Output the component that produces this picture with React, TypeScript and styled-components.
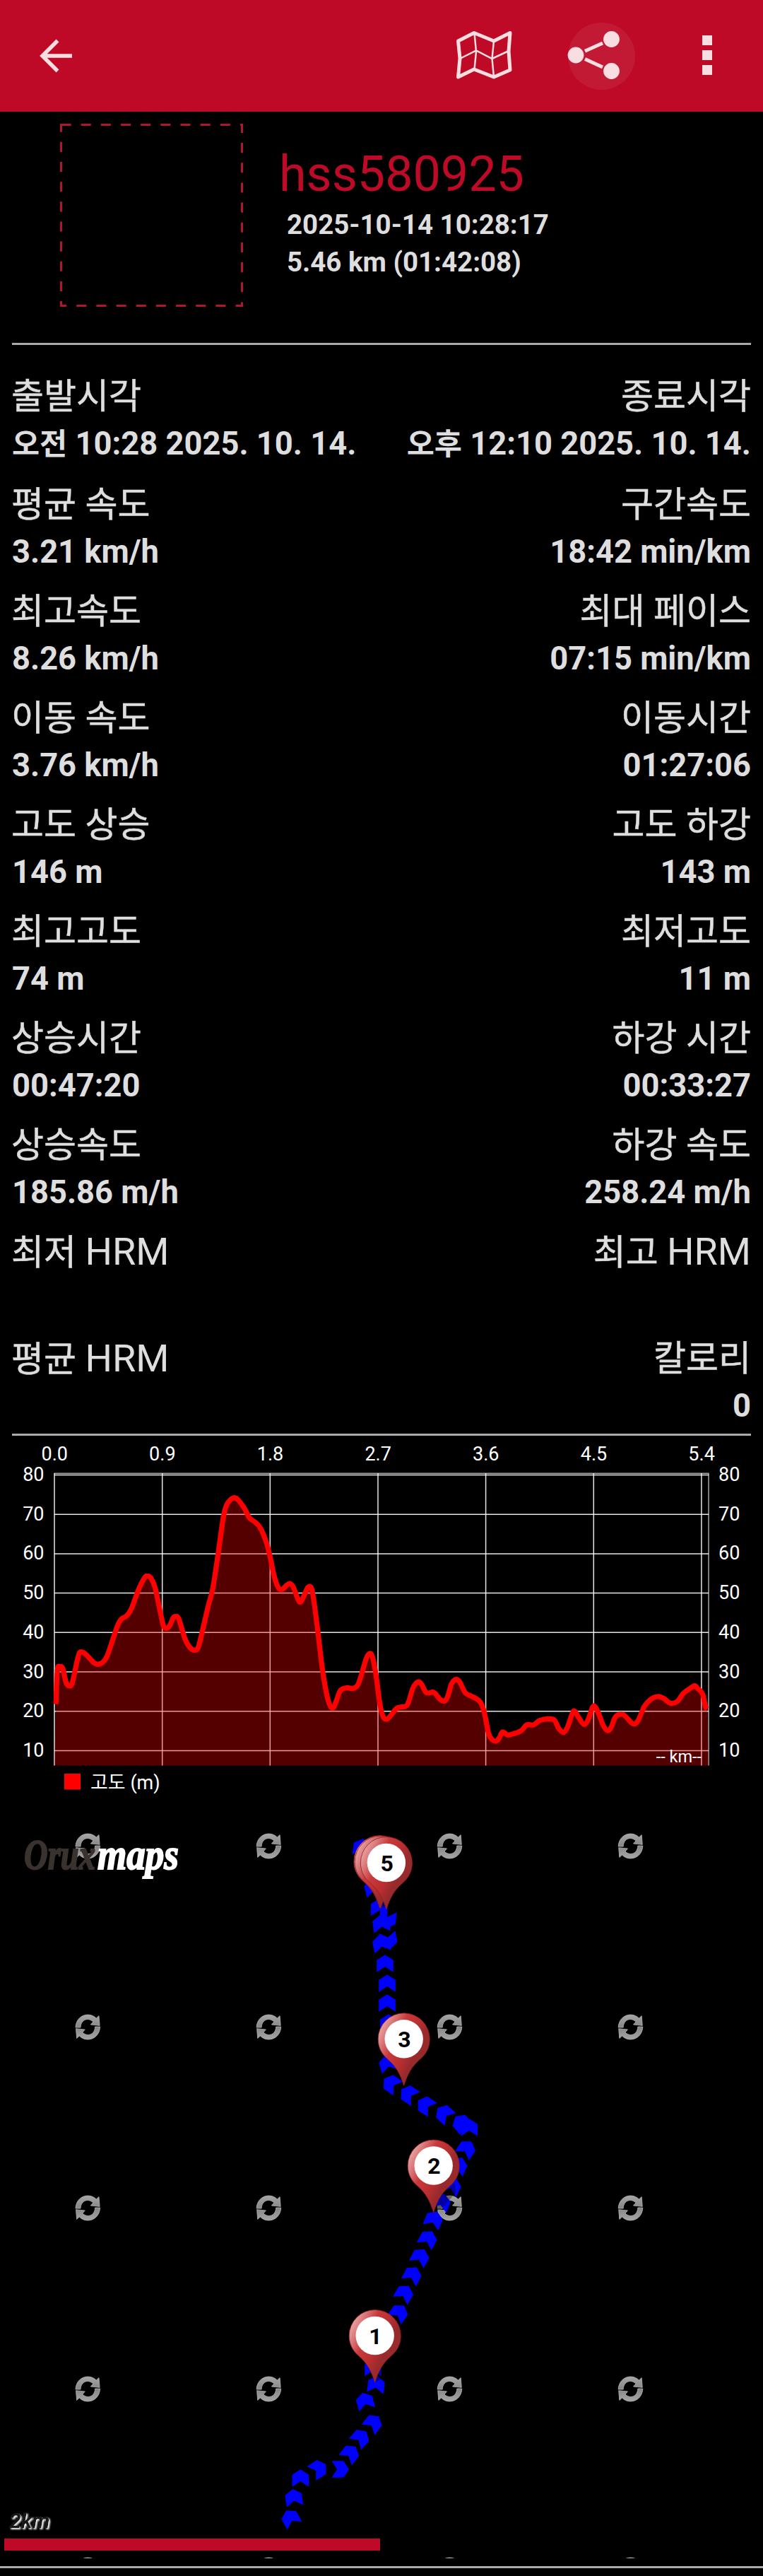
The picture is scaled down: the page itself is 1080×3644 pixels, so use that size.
import * as React from 'react';
import styled, { createGlobalStyle } from 'styled-components';

const fonts = `Roboto, 'Noto Sans CJK KR', sans-serif`;
const red = '#be0a26';

const GlobalStyle = createGlobalStyle`
    body {
        margin: 0;
        background: #000000;
    }
`;

const Page = styled.div`
    display: flex;
    flex-direction: column;
    width: 1080px;
    height: 3644px;
    overflow: hidden;
    background: #000000;
    color: #dedede;
    font-family: ${fonts};
`;

const Toolbar = styled.header`
    display: flex;
    align-items: center;
    flex: none;
    height: 158px;
    background: ${red};
`;

const IconButton = styled.button`
    width: 158px;
    height: 158px;
    padding: 0;
    border: none;
    background: transparent;
    color: #f8dde1;
    cursor: pointer;

    svg {
        display: block;
    }
`;

const Spacer = styled.div`
    flex: 1;
`;

const Summary = styled.section`
    display: flex;
    flex: none;
    height: 327px;
`;

const Photo = styled.svg`
    flex: none;
    margin: 17px 0 0 85px;
`;

const SummaryText = styled.div`
    display: flex;
    flex-direction: column;
    padding: 48px 0 0 51px;
`;

const UserName = styled.h1`
    margin: 0;
    font-size: 70px;
    font-weight: 400;
    line-height: 80px;
    color: ${red};
`;

const SummaryLine = styled.div`
    padding-left: 11px;
    font-size: 38.5px;
    font-weight: 700;
    line-height: 53px;
    white-space: nowrap;

    ${UserName} + & {
        padding-top: 5px;
    }
`;

const Divider = styled.hr<{ full?: boolean }>`
    flex: none;
    height: 3px;
    margin: 0 ${p => (p.full ? 0 : 17)}px;
    border: none;
    background: #aaaaaa;
`;

const Stats = styled.section`
    flex: none;
    box-sizing: border-box;
    height: 1540px;
    padding: 38px 17px 0;
`;

const StatRow = styled.div`
    display: flex;
    justify-content: space-between;
    height: 151px;

    &:first-child {
        height: 153px;
    }
`;

const Stat = styled.div<{ right?: boolean }>`
    text-align: ${p => (p.right ? 'right' : 'left')};
    white-space: nowrap;
`;

const Label = styled.div`
    height: 70px;
    margin-left: -1px;
    font-size: 50px;
    line-height: 70px;
    -webkit-text-stroke: 0.5px #dedede;
`;

const Latin = styled.span`
    font-size: 54px;
    -webkit-text-stroke: 0;
`;

const Value = styled.div`
    height: 64px;
    font-size: 45.3px;
    font-weight: 700;
    line-height: 64px;
`;

const Meridiem = styled.span`
    font-size: 42.5px;
`;

const Chart = styled.svg`
    display: block;
    flex: none;
    font-family: ${fonts};
`;

const Map = styled.svg`
    display: block;
    flex: none;
    margin-bottom: 11px;
    font-family: ${fonts};
`;

const stats = [
    ['출발시각', '오전 10:28 2025. 10. 14.', '종료시각', '오후 12:10 2025. 10. 14.'],
    ['평균 속도', '3.21 km/h', '구간속도', '18:42 min/km'],
    ['최고속도', '8.26 km/h', '최대 페이스', '07:15 min/km'],
    ['이동 속도', '3.76 km/h', '이동시간', '01:27:06'],
    ['고도 상승', '146 m', '고도 하강', '143 m'],
    ['최고고도', '74 m', '최저고도', '11 m'],
    ['상승시간', '00:47:20', '하강 시간', '00:33:27'],
    ['상승속도', '185.86 m/h', '하강 속도', '258.24 m/h'],
    ['최저 HRM', '', '최고 HRM', ''],
    ['평균 HRM', '', '칼로리', '0'],
];

// profile samples, in 1/2.904 px horizontally and 1/2.8 px vertically
const profile = [
    230, 1150, 236, 1015, 246, 1002, 258, 1008, 272, 1065, 286, 1078, 297, 1065, 318, 975, 328, 945, 344, 946,
    365, 965, 385, 985, 402, 992, 425, 982, 442, 955, 465, 890, 485, 835, 500, 812, 520, 800, 540, 772,
    570, 695, 595, 648, 606, 643, 620, 650, 638, 690, 660, 790, 672, 840, 685, 850, 698, 838, 712, 808,
    722, 803, 735, 812, 760, 890, 780, 925, 800, 936, 815, 925, 832, 860, 855, 765, 875, 690, 895, 565,
    918, 410, 932, 360, 950, 338, 965, 332, 980, 342, 1005, 375, 1025, 412, 1050, 430, 1072, 455, 1095, 510,
    1110, 565, 1125, 635, 1142, 685, 1157, 697, 1175, 682, 1190, 672, 1205, 685, 1225, 735, 1235, 745, 1250, 720,
    1265, 688, 1280, 690, 1290, 740, 1305, 850, 1325, 1010, 1345, 1120, 1360, 1162, 1372, 1162, 1385, 1130,
    1400, 1095, 1425, 1085, 1450, 1088, 1470, 1075, 1485, 1035, 1505, 970, 1518, 950, 1530, 960, 1545, 1030,
    1560, 1140, 1573, 1195, 1590, 1210, 1610, 1190, 1633, 1165, 1668, 1158, 1680, 1140, 1698, 1085, 1718, 1062,
    1733, 1072, 1753, 1105, 1783, 1103, 1808, 1130, 1826, 1138, 1840, 1120, 1856, 1070, 1873, 1052, 1890, 1062,
    1913, 1105, 1948, 1123, 1973, 1140, 1990, 1180, 2008, 1265, 2023, 1290, 2040, 1296, 2053, 1282, 2066, 1260,
    2088, 1272, 2118, 1265, 2143, 1255, 2165, 1232, 2193, 1232, 2218, 1215, 2253, 1208, 2278, 1212, 2296, 1245,
    2316, 1262, 2333, 1240, 2353, 1185, 2363, 1178, 2380, 1205, 2400, 1230, 2416, 1215, 2436, 1162, 2446, 1160,
    2460, 1185, 2480, 1235, 2498, 1255, 2513, 1240, 2530, 1200, 2558, 1190, 2578, 1205, 2603, 1228, 2623, 1215,
    2648, 1160, 2673, 1132, 2703, 1120, 2728, 1127, 2753, 1145, 2783, 1140, 2808, 1108, 2833, 1090, 2855, 1077,
    2868, 1088, 2888, 1110, 2900, 1160, 2908, 1168,
];

const CHART_TOP = 2031;
const MAP_TOP = 2565;

const points: number[][] = [];
for (let i = 0; i < profile.length; i += 2) {
    points.push([profile[i] / 2.904, profile[i + 1] / 2.8 + 2000 - CHART_TOP]);
}

// Catmull-Rom through the samples
const curve = points.slice(1).reduce((d, p, i) => {
    const a = points[Math.max(i - 1, 0)];
    const b = points[i];
    const c = points[Math.min(i + 2, points.length - 1)];
    const c1 = [b[0] + (p[0] - a[0]) / 6, b[1] + (p[1] - a[1]) / 6];
    const c2 = [p[0] - (c[0] - b[0]) / 6, p[1] - (c[1] - b[1]) / 6];
    return `${d} C${[...c1, ...c2, ...p].map(n => n.toFixed(1)).join(' ')}`;
}, `M${points[0].map(n => n.toFixed(1)).join(' ')}`);

const xTicks = ['0.0', '0.9', '1.8', '2.7', '3.6', '4.5', '5.4'];
const yTicks = [80, 70, 60, 50, 40, 30, 20, 10];

// x, y, heading
const arrows = [
    [512, 2613, 10], [528, 2670, -15], [536.7, 2698, 0], [539.5, 2721, -8], [548.5, 2716, 187],
    [539.5, 2749, -12], [550, 2745, 170], [545, 2777.5, 0], [548, 2805.5, 0], [548, 2833.5, 0], [550, 2861.5, 0],
    [549, 2919, -15], [553.5, 2947.5, -55], [578, 2962.5, -57], [602, 2978, -57], [628.5, 2990, -48],
    [652.5, 3003, -40], [664.3, 3009.5, 0], [660.5, 3039.5, 33], [649, 3063, 25], [640, 3092, 25],
    [625, 3115, 20], [614, 3139.5, 22], [606, 3167, 28], [595, 3192.5, 28], [584, 3218, 28], [572.5, 3244, 30],
    [565, 3271.5, 35], [528, 3349, 0], [532.5, 3373, 8], [516.5, 3396.5, -15], [528.5, 3427.5, 38],
    [510.5, 3448.5, 42], [496, 3470.5, 38], [481.7, 3493, 90], [451, 3492.5, 57], [425.3, 3505.5, 0],
    [415.8, 3533, -8], [411, 3562, -29],
];

const tileRows = [2611, 2867, 3123, 3379, 3635];
const tileColumns = [124.3, 380.4, 636.5, 892.5];

const arc = 'M-17.3 1C-17-10-9-17 0-17c5 0 9 2 12 5l3.7-3.4L16.8-1.7 4-3l3.6-4C5-9.5 2-10.5 0-10.5-6-10.5-10-6-10.3 1z';

const Reload = ({ x, y }: { x: number; y: number }) => (
    <g transform={`translate(${x} ${y})`} stroke="#b4b4b4" strokeWidth="0.8">
        <path d={arc} fill="url(#reload)" />
        <path d={arc} fill="url(#reload)" transform="translate(0 1) rotate(180)" />
    </g>
);

const Pin = ({ x, y, label }: { x: number; y: number; label?: string }) => (
    <g transform={`translate(${x} ${y})`}>
        <path d="M0 66L6 46 30 24 32 38 12 60z" fill="#000000" opacity="0.35" />
        <path
            d="M0 66C-5 50-11 39-22 29.5-31 22-36.5 13-36.5 0a36.5 36.5 0 0 1 73 0C36.5 13 31 22 22 29.5 11 39 5 50 0 66z"
            fill="url(#pin)"
            stroke="#8f2023"
            strokeWidth="0.8"
        />
        <circle r="27.2" fill="#ffffff" />
        {label && <text x="0.8" y="11.5" fill="#000000" fontSize="32" fontWeight="700" textAnchor="middle">{label}</text>}
    </g>
);

const renderLabel = (text: string) => {
    const [name, rest] = text.split('HRM');
    return <Label>{name}{rest !== undefined && <Latin>HRM</Latin>}</Label>;
};

const renderValue = (text: string) => (
    <Value>
        {text.startsWith('오') ? <><Meridiem>{text.slice(0, 2)}</Meridiem>{text.slice(2)}</> : text}
    </Value>
);

export default () => (
    <Page>
        <GlobalStyle />
        <Toolbar>
            <IconButton aria-label="back">
                <svg width="158" height="158" fill="none" stroke="currentColor" strokeWidth="5.5">
                    <path d="M102 79H60M81.5 57.5L60 79l21.5 21.5" />
                </svg>
            </IconButton>
            <Spacer />
            <IconButton aria-label="map">
                <svg width="158" height="158" viewBox="606 0 158 158" fill="none" stroke="currentColor">
                    <path d="M648.5 58l22.5-11.5 28 11.5 23-11.5-2 26 2 26.5-23 10-28-11-22.5 11 2.5-26.5z" strokeWidth="5" strokeLinejoin="round" />
                    <path d="M671.5 47l2.5 26-2.5 25M699 58l-2.5 25 2.5 26M651 83l23-11.5L696.5 83l23.5-11" strokeWidth="2.5" />
                </svg>
            </IconButton>
            <IconButton aria-label="share">
                <svg width="158" height="158" viewBox="764 0 158 158" fill="currentColor">
                    <circle cx="851.5" cy="79.5" r="47.5" fill="#c21a34" />
                    <circle cx="815" cy="78" r="11.4" />
                    <circle cx="865.5" cy="55.5" r="11.4" />
                    <circle cx="865.5" cy="100.5" r="11.4" />
                    <path d="M828 72.3L853 61M828 83.5l25 11.5" stroke="currentColor" strokeWidth="5" />
                </svg>
            </IconButton>
            <IconButton aria-label="more">
                <svg width="158" height="158" viewBox="922 0 158 158" fill="currentColor">
                    <path d="M994 50h14v14h-14zM994 71h14v14h-14zM994 92h14v14h-14z" />
                </svg>
            </IconButton>
        </Toolbar>

        <Summary>
            <Photo width="259" height="259">
                <rect x="1.5" y="1.5" width="256" height="256" fill="none" stroke="#b2162d" strokeWidth="3" strokeDasharray="14.08 14.08" />
            </Photo>
            <SummaryText>
                <UserName>hss580925</UserName>
                <SummaryLine>2025-10-14 10:28:17</SummaryLine>
                <SummaryLine>5.46 km (01:42:08)</SummaryLine>
            </SummaryText>
        </Summary>

        <Divider />
        <Stats>
            {stats.map(([label, value, label2, value2]) => (
                <StatRow key={label}>
                    <Stat>
                        {renderLabel(label)}
                        {renderValue(value)}
                    </Stat>
                    <Stat right>
                        {renderLabel(label2)}
                        {renderValue(value2)}
                    </Stat>
                </StatRow>
            ))}
        </Stats>
        <Divider />

        <Chart width="1080" height="534" fill="#ffffff" fontSize="27">
            <g stroke="#ffffff" strokeOpacity="0.9" strokeWidth="1.5">
                {yTicks.map((t, i) => <path key={t} d={`M77 ${(55.5 + i * 55.7).toFixed(1)}H1003`} />)}
                {xTicks.map((t, i) => <path key={t} d={`M${(77 + i * 152.65).toFixed(1)} 53V466.5`} />)}
                <path d="M76.5 53.3H1003V466.5" fill="none" strokeOpacity="0.65" />
            </g>
            <path d={`${curve} L1003 466.5 L77 466.5Z`} fill="#ff0000" fillOpacity="0.33" />
            <path d={curve} fill="none" stroke="#ff0000" strokeWidth="7.2" />
            <text x="993" y="462" fontSize="23.5" textAnchor="end">-- km--</text>
            {xTicks.map((t, i) => (
                <text key={t} x={77.2 + i * 152.65} y="35" textAnchor="middle">{t}</text>
            ))}
            {yTicks.map((t, i) => (
                <React.Fragment key={t}>
                    <text x="62.5" y={64 + i * 55.7} textAnchor="end">{t}</text>
                    <text x="1017" y={64 + i * 55.7}>{t}</text>
                </React.Fragment>
            ))}
            <rect x="91" y="478" width="23" height="22.5" fill="#ff0000" />
            <text x="128" y="500">고도 (m)</text>
        </Chart>

        <Map width="1080" height="1054" viewBox={`0 ${MAP_TOP} 1080 1054`}>
            <defs>
                <linearGradient id="reload" x1="0" y1="0" x2="0" y2="1">
                    <stop offset="0" stopColor="#a6a6a6" />
                    <stop offset="1" stopColor="#858585" />
                </linearGradient>
                <linearGradient id="pin" gradientUnits="userSpaceOnUse" x1="-36" y1="-16" x2="30" y2="16">
                    <stop offset="0" stopColor="#ecabab" />
                    <stop offset="0.2" stopColor="#d97577" />
                    <stop offset="0.4" stopColor="#c9393b" />
                    <stop offset="0.65" stopColor="#bb2f31" />
                    <stop offset="0.85" stopColor="#992a2c" />
                </linearGradient>
                <filter id="glow" x="-20%" y="-20%" width="150%" height="150%">
                    <feDropShadow dx="2" dy="2" stdDeviation="0.8" floodColor="#ffffff" />
                </filter>
            </defs>
            {tileRows.map(y => tileColumns.map(x => <Reload key={`${x}-${y}`} x={x} y={y} />))}
            <g fill="#0000ff">
                {arrows.map(([x, y, angle]) => (
                    <path
                        key={`${x}-${y}`}
                        d="M0-12.2L11.8-4.7V12.2L0 4.5-11.8 12.2V-4.7z"
                        transform={`translate(${x} ${y}) rotate(${angle})`}
                    />
                ))}
            </g>
            <Pin x={530.7} y={3304} label="1" />
            <Pin x={613.7} y={3063.5} label="2" />
            <Pin x={571.7} y={2884.3} label="3" />
            <Pin x={537.5} y={2633} />
            <Pin x={538.8} y={2633.5} />
            <Pin x={546.9} y={2635} label="5" />
            <g fontFamily="'Liberation Serif', serif" fontSize="61" fontStyle="italic" fontWeight="700" strokeWidth="2">
                <text x="34" y="2643.5" fill="#3a322e" stroke="#3a322e" textLength="101" lengthAdjust="spacingAndGlyphs">Orux</text>
                <text x="138" y="2643.5" fill="#ffffff" stroke="#ffffff" textLength="115" lengthAdjust="spacingAndGlyphs">maps</text>
            </g>
            <text x="13" y="3576" fontSize="30" fontStyle="italic" fontWeight="700" fill="#141414" filter="url(#glow)">2km</text>
            <rect x="6" y="3591" width="532" height="17" fill={red} />
        </Map>
        <Divider full />
    </Page>
);
